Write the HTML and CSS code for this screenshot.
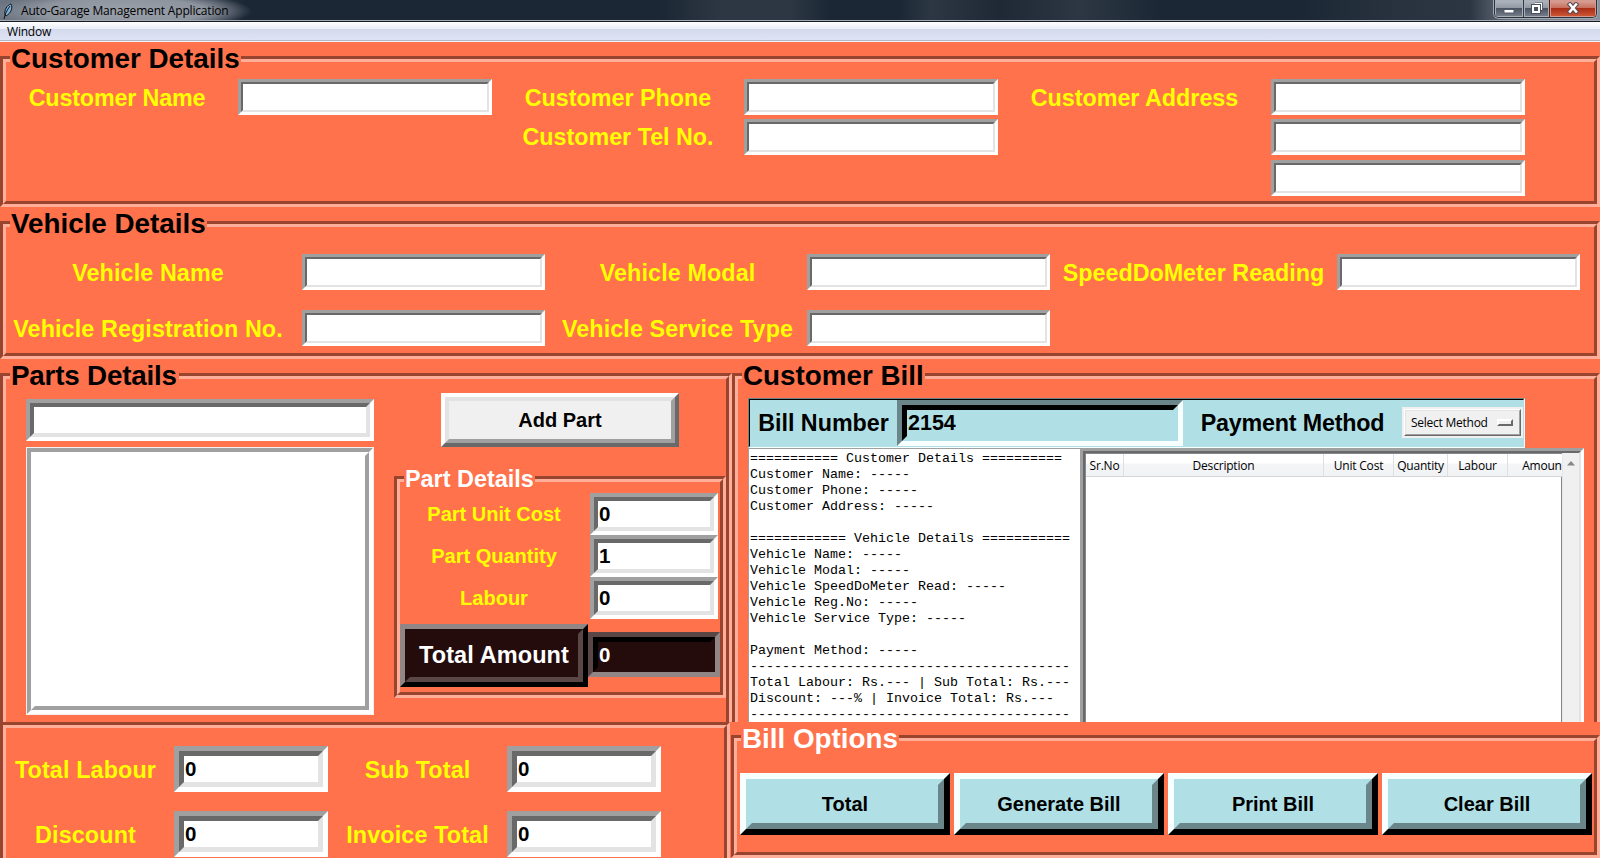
FILE: index.html
```html
<!DOCTYPE html>
<html lang="en">
<head>
	<meta charset="UTF-8">
	<title>Auto-Garage Management Application</title>
	<link rel="stylesheet" href="styles.css">
</head>
<body>
	<div class="app">
		<!-- title bar -->
		<div class="titlebar">
			<svg class="feather" width="12" height="16" viewBox="0 0 12 16">
				<path d="M3 12C2 7 5 2 9 1C11 5 9 10 4 13Z" fill="#7fb2dc" stroke="#10151c" stroke-width="1"/>
				<path d="M2 16C3 11 5 7 8 3" fill="none" stroke="#10151c" stroke-width="1"/>
			</svg>
			<span class="t_text">Auto-Garage Management Application</span>
			<div class="t_btns">
				<span class="t_btn t_min">
					<svg width="12" height="6" viewBox="0 0 12 6"><rect x="1" y="1.5" width="10" height="3.5" fill="#fff" stroke="#535966"/></svg>
				</span>
				<span class="t_btn t_max">
					<svg width="12" height="12" viewBox="0 0 12 12"><path d="M4 2H11V9" fill="none" stroke="#4b515e" stroke-width="3"/><path d="M4 1.5H10.5V8" fill="none" stroke="#fff" stroke-width="1.2"/><rect x="2" y="4" width="6" height="6" fill="#4b515e" stroke="#4b515e" stroke-width="4"/><rect x="2" y="4" width="6" height="6" fill="#4b515e" stroke="#fff" stroke-width="2"/></svg>
				</span>
				<span class="t_btn t_close">
					<svg width="14" height="12" viewBox="0 0 14 12"><path d="M4 2.5L10 9.5M10 2.5L4 9.5" stroke="#5a4a50" stroke-width="4.6" stroke-linecap="square"/><path d="M4 2.5L10 9.5M10 2.5L4 9.5" stroke="#fff" stroke-width="2.6" stroke-linecap="square"/></svg>
				</span>
			</div>
		</div>
		<div class="menubar"><span class="m_text">Window</span></div>

		<!-- customer -->
		<div class="frame customer">
			<div class="frame_in">
				<h2 class="legend">Customer Details</h2>
				<div class="c_grid">
					<label class="c_name">Customer Name</label>
					<div class="entry"><input type="text"></div>
					<label>Customer Phone</label>
					<div class="entry"><input type="text"></div>
					<label>Customer Address</label>
					<div class="entry"><input type="text"></div>
					<label class="c_tel">Customer Tel No.</label>
					<div class="entry"><input type="text"></div>
					<div class="entry c_addr"><input type="text"></div>
					<div class="entry c_addr"><input type="text"></div>
				</div>
			</div>
		</div>

		<!-- vehicle -->
		<div class="frame vehicle">
			<div class="frame_in">
				<h2 class="legend">Vehicle Details</h2>
				<div class="v_grid">
					<label class="v_first">Vehicle Name</label>
					<div class="entry"><input type="text"></div>
					<label class="v_second">Vehicle Modal</label>
					<div class="entry"><input type="text"></div>
					<label>SpeedDoMeter Reading</label>
					<div class="entry"><input type="text"></div>
					<label class="v_first">Vehicle Registration No.</label>
					<div class="entry"><input type="text"></div>
					<label class="v_second">Vehicle Service Type</label>
					<div class="entry"><input type="text"></div>
				</div>
			</div>
		</div>

		<div class="lower">
			<!-- parts -->
			<div class="cell">
				<div class="frame parts">
					<div class="frame_in">
						<h2 class="legend p_legend">Parts Details</h2>
						<div class="p_cols">
							<div class="p_left">
								<div class="entry entry_4"><input type="text"></div>
								<div class="listbox"><div class="l_groove"><div class="l_in"></div></div></div>
							</div>
							<div class="p_right">
								<div class="btn add"><span>Add Part</span></div>
								<div class="frame part">
									<div class="frame_in">
										<h3 class="legend legend_s">Part Details</h3>
										<div class="d_grid">
											<label>Part Unit Cost</label>
											<div class="entry entry_4"><input type="text" value="0"></div>
											<label>Part Quantity</label>
											<div class="entry entry_4"><input type="text" value="1"></div>
											<label>Labour</label>
											<div class="entry entry_4"><input type="text" value="0"></div>
										</div>
										<div class="d_total">
											<div class="btn dark"><span>Total Amount</span></div>
											<div class="entry entry_dark"><input type="text" value="0"></div>
										</div>
									</div>
								</div>
							</div>
						</div>
					</div>
				</div>
			</div>

			<!-- bill -->
			<div class="cell">
				<div class="frame bill">
					<div class="frame_in">
						<h2 class="legend">Customer Bill</h2>
						<div class="b_bar">
							<div class="b_bar_in">
								<label class="b_num">Bill Number</label>
								<div class="entry entry_blue"><input type="text" value="2154"></div>
								<label class="b_pay">Payment Method</label>
								<div class="option"><div class="o_out"><div class="o_in">Select Method<i class="o_mark"></i></div></div></div>
							</div>
						</div>
						<div class="b_body">
<pre class="b_text">=========== Customer Details ==========
Customer Name: -----
Customer Phone: -----
Customer Address: -----

============ Vehicle Details ===========
Vehicle Name: -----
Vehicle Modal: -----
Vehicle SpeedDoMeter Read: -----
Vehicle Reg.No: -----
Vehicle Service Type: -----

Payment Method: -----
----------------------------------------
Total Labour: Rs.--- | Sub Total: Rs.---
Discount: ---% | Invoice Total: Rs.---
----------------------------------------
</pre>
							<div class="tree">
								<div class="tree_in">
									<div class="t_main">
										<div class="t_head">
											<span>Sr.No</span><span>Description</span><span>Unit Cost</span><span>Quantity</span><span>Labour</span><span>Amount</span>
										</div>
										<div class="t_rows"></div>
									</div>
									<div class="t_scroll">
										<svg width="8" height="5" viewBox="0 0 8 5"><path d="M4 0L8 4.5H0Z" fill="#85878c"/></svg>
									</div>
								</div>
							</div>
						</div>
					</div>
				</div>
			</div>

			<!-- totals -->
			<div class="frame totals">
				<div class="frame_in">
					<div class="s_grid">
						<label class="s_first">Total Labour</label>
						<div class="entry entry_5"><input type="text" value="0"></div>
						<label>Sub Total</label>
						<div class="entry entry_5"><input type="text" value="0"></div>
						<label class="s_first">Discount</label>
						<div class="entry entry_5"><input type="text" value="0"></div>
						<label>Invoice Total</label>
						<div class="entry entry_5"><input type="text" value="0"></div>
					</div>
				</div>
			</div>

			<!-- options -->
			<div class="frame options">
				<div class="frame_in">
					<h2 class="legend white">Bill Options</h2>
					<div class="o_grid">
						<div class="btn blue"><span>Total</span></div>
						<div class="btn blue"><span>Generate Bill</span></div>
						<div class="btn blue"><span>Print Bill</span></div>
						<div class="btn blue"><span>Clear Bill</span></div>
					</div>
				</div>
			</div>
		</div>
	</div>
</body>
</html>
```
FILE: styles.css
```css
*{box-sizing:border-box;}
body{margin:0;padding:0;background:#fff;font-family:"Liberation Sans",Arial,sans-serif;}
h2,h3,pre{margin:0;padding:0;}
label{display:block;color:#ff0;font-size:23.3px;font-weight:bold;text-align:center;white-space:nowrap;}

.app{
	width: 1600px;
	height: 858px;
	overflow: hidden;
	background: #ff724c;
}

/* title bar */
.titlebar{
	height: 22px;
	display: flex;
	align-items: flex-start;
	border-bottom: 1px solid #151a24;
	box-shadow: inset 0 -1px #a3a8b3;
	background:
		radial-gradient(ellipse 130px 20px at 122px 11px, #9aa1aa 0, #8d949e 65%, rgba(110,118,130,0) 100%),
		linear-gradient(90deg, #6b7480 0, #4a5562 180px, #1c2735 245px, #1c2735 660px, #2d3744 720px, #2d3744 790px, #1c2735 830px, #1c2735 900px, #2d3744 930px, #1f2936 1000px, #2d3744 1080px, #1c2735 1160px, #1c2735 1300px, #293340 1400px, #2c3642 1470px, #68717d 1510px, #8a929c 1600px);
}

.feather{
	margin: 3px 0 0 2px;
}

.t_text{
	margin-left: 7px;
	font: 12px/22px "Open Sans","Noto Sans",sans-serif;
	letter-spacing: -.18px;
	color: #000;
}

.t_btns{
	display: flex;
	width: 103px;
	height: 18px;
	margin: 0 3px 0 auto;
	border: 1px solid #2c323c;
	border-top: 0;
	border-radius: 0 0 5px 5px;
	overflow: hidden;
	box-shadow: 0 0 0 1px #a2a8b1;
}

.t_btn{
	display: flex;
	align-items: center;
	justify-content: center;
	background: linear-gradient(#b3b8c0 0, #9299a3 45%, #4c5562 50%, #78818c 100%);
	box-shadow: inset 0 0 0 1px #a9afb8;
}

.t_min{
	width: 28px;
	padding-top: 5px;
}

.t_max{
	width: 26px;
	padding-bottom: 2px;
	border-left: 1px solid #333a45;
}

.t_close{
	width: 47px;
	padding-bottom: 2px;
	border-left: 1px solid #5c1c14;
	background: linear-gradient(#d9a79d 0, #c8705f 45%, #ab2d16 50%, #cf5b38 100%);
	box-shadow: inset 0 0 0 1px #d49a90;
}

.menubar{
	height: 20px;
	border-bottom: 1px solid #f3f4f8;
	box-shadow: inset 0 -1px #b4b8c6;
	background: linear-gradient(#fff 0, #e9edf6 7px, #d4daec 7px, #e0e4f5 100%);
}

.m_text{
	display: block;
	margin-left: 7px;
	font: 12px/20px "Open Sans","Noto Sans",sans-serif;
	letter-spacing: -.2px;
}

/* grooved frames */
.frame{
	border: 3px solid;
	border-color: #99442e #ffaf99 #ffaf99 #99442e;
}

.frame_in{
	height: 100%;
	border: 3px solid;
	border-color: #ffaf99 #99442e #99442e #ffaf99;
	display: flow-root;
}

.legend{
	width: fit-content;
	height: 32px;
	margin: -19px 0 0 4px;
	padding: 0 1px;
	font-size: 27.8px;
	line-height: 31px;
	background: #ff724c;
	white-space: nowrap;
}

.p_legend{
	padding-right: 2px;
	letter-spacing: -.2px;
}

.white{
	line-height: 33px;
	color: #fff;
}

/* sunken entries */
.entry{
	height: 36px;
	border: 3px solid;
	border-color: #a0a0a0 #fff #fff #a0a0a0;
}

.entry input{
	display: block;
	width: 100%;
	height: 100%;
	margin: 0;
	padding: 0 1px;
	border: 2px solid;
	border-color: #696969 #e3e3e3 #e3e3e3 #696969;
	border-radius: 0;
	outline: 0;
	background: #fff;
	font: bold 20.5px "Liberation Sans",Arial,sans-serif;
	color: #000;
}

.entry_4{
	height: 42px;
	border-width: 4px;
}

.entry_4 input{
	border-width: 4px;
}

.entry_5{
	height: 46px;
	border-width: 5px;
}

.entry_5 input{
	border-width: 5px;
}

.entry_dark{
	height: 45px;
	margin-top: -2px;
	border-width: 5px;
	border-color: #5b4646 #918585 #918585 #5b4646;
}

.entry_dark input{
	border-width: 5px;
	border-color: #000 #240b0c #240b0c #000;
	background: #240b0c;
	color: #fff;
}

.entry_blue{
	width: 286px;
	height: 46px;
	border-width: 5px;
	border-color: #6a868a #f8ffff #f8ffff #6a868a;
}

.entry_blue input{
	border-width: 5px;
	border-color: #000 #b0e0e6 #b0e0e6 #000;
	background: #b0e0e6;
	font-size: 21.5px;
}

/* raised buttons */
.btn{
	border: 4px solid;
	border-color: #fff #696969 #696969 #fff;
	font-size: 20px;
	font-weight: bold;
}

.btn span{
	display: flex;
	align-items: center;
	justify-content: center;
	height: 100%;
	border: 4px solid;
	border-color: #e3e3e3 #a0a0a0 #a0a0a0 #e3e3e3;
	background: #f0f0f0;
}

.blue{
	height: 62px;
	border-width: 6px;
	border-color: #f8ffff #000 #000 #f8ffff;
}

.blue span{
	border-width: 6px;
	border-color: #b0e0e6 #6a868a #6a868a #b0e0e6;
	background: #b0e0e6;
}

.dark{
	height: 63px;
	border-width: 5px;
	border-color: #918585 #000 #000 #918585;
	font-size: 23.5px;
	letter-spacing: .1px;
	color: #fff;
}

.dark span{
	border-width: 5px;
	border-color: #240b0c #5b4646 #5b4646 #240b0c;
	background: #240b0c;
}

/* customer */
.customer{
	height: 151px;
	margin-top: 14px;
}

.c_grid{
	display: grid;
	grid-template-columns: 232px 254px 252px 254px 273px 254px;
	grid-template-rows: 40px 41px 36px;
	margin-top: 4px;
}

.c_grid label,
.v_grid label{
	line-height: 38px;
}

.c_grid .c_name{
	padding-right: 10px;
	letter-spacing: -.15px;
}

.c_grid .c_tel{
	grid-column: 3;
	line-height: 36px;
}

.c_addr{
	grid-column: 6;
}

/* vehicle */
.vehicle{
	height: 138px;
	margin-top: 14px;
}

.v_grid{
	display: grid;
	grid-template-columns: 296px 243px 262px 243px 287px 243px;
	grid-template-rows: 56px 36px;
	margin-top: 14px;
}

.v_first{
	padding-right: 12px;
	letter-spacing: .12px;
}

.v_second{
	padding-left: 3px;
	letter-spacing: .12px;
}

/* lower part */
.lower{
	display: grid;
	grid-template-columns: 732px 868px;
	grid-template-rows: 363px 142px;
}

.cell{
	padding-top: 14px;
	overflow: hidden;
}

.parts,
.bill{
	height: 400px;
}

.p_cols{
	display: flex;
}

.p_left{
	width: 348px;
	margin: 7px 20px 0 20px;
}

.listbox{
	height: 268px;
	margin-top: 6px;
	border: 1px solid #f0f0f0;
}

.l_groove{
	height: 100%;
	border: 4px solid;
	border-color: #a0a0a0 #fff #fff #a0a0a0;
}

.l_in{
	height: 100%;
	border: 4px solid;
	border-color: #fff #a0a0a0 #a0a0a0 #fff;
	background: #fff;
}

.p_right{
	width: 332px;
	padding-top: 1px;
}

.add{
	width: 238px;
	height: 54px;
	margin-left: 47px;
}

.part{
	height: 222px;
	margin-top: 29px;
}

.legend_s{
	height: 27px;
	margin-top: -17px;
	font-size: 23.4px;
	line-height: 28px;
	color: #fff;
}

.d_grid{
	display: grid;
	grid-template-columns: 190px 128px;
	margin-top: 1px;
}

.d_grid label{
	padding-right: 2px;
	font-size: 20px;
	line-height: 42px;
}

.d_total{
	display: grid;
	grid-template-columns: 188px 132px;
	align-items: center;
	margin-top: 5px;
}

/* customer bill */
.b_bar{
	width: 777px;
	height: 50px;
	margin: 6px 0 0 10px;
	border: 1px solid;
	border-color: #6a868a #f8ffff #f8ffff #6a868a;
}

.b_bar_in{
	display: flex;
	height: 48px;
	border: 1px solid;
	border-color: #000 #b0e0e6 #b0e0e6 #000;
	background: #b0e0e6;
}

.b_bar label{
	color: #000;
	line-height: 46px;
}

.b_num{
	width: 147px;
}

.b_pay{
	width: 219px;
	letter-spacing: -.2px;
}

.option{
	width: 121px;
	height: 31px;
	margin-top: 7px;
	padding: 2px;
	background: #f0f0f0;
}

.o_out{
	height: 27px;
	border: 1px solid;
	border-color: #fff #696969 #696969 #fff;
}

.o_in{
	display: flex;
	align-items: center;
	height: 25px;
	padding-left: 5px;
	border: 1px solid;
	border-color: #e3e3e3 #a0a0a0 #a0a0a0 #e3e3e3;
	font: 12px "Open Sans","Noto Sans",sans-serif;
	letter-spacing: -.25px;
	white-space: nowrap;
}

.o_mark{
	width: 16px;
	height: 7px;
	margin: 0 6px 0 auto;
	border: 2px solid;
	border-color: #fff #696969 #696969 #fff;
	background: #f0f0f0;
}

.b_body{
	display: flex;
	margin-left: 10px;
}

.b_text{
	width: 332px;
	height: 300px;
	padding: 2px 0 0 1px;
	border-top: 1px solid #a0a0a0;
	border-left: 1px solid #a0a0a0;
	background: #fff;
	font: 13.333px/16px "Liberation Mono",monospace;
}

.tree{
	width: 504px;
	height: 300px;
	border: 3px solid;
	border-color: #a0a0a0 #fff #fff #a0a0a0;
}

.tree_in{
	display: flex;
	height: 100%;
	border: 2px solid;
	border-color: #696969 #e3e3e3 #e3e3e3 #696969;
	background: #fff;
}

.t_main{
	width: 477px;
	border: 1px solid #828790;
	border-right: 0;
}

.t_head{
	display: grid;
	grid-template-columns: 38px 200px 70px 54px 60px 73px;
	height: 23px;
	overflow: hidden;
	border-bottom: 1px solid #d5d5d5;
	background: linear-gradient(#fff 0, #fff 9px, #f4f5f7 10px, #f1f2f4 100%);
	font: 12px/23px "Open Sans","Noto Sans",sans-serif;
	letter-spacing: -.2px;
	text-align: center;
	white-space: nowrap;
}

.t_head span{
	border-right: 1px solid #dfe0e2;
}

.t_rows{
	height: 270px;
	border-right: 1px solid #828790;
}

.t_scroll{
	width: 17px;
	padding: 3px 0 0 4px;
	border-left: 1px solid #e7e7e7;
	background: #f0f0f0;
	line-height: 10px;
}

/* totals */
.totals{
	width: 730px;
	height: 142px;
}

.s_grid{
	display: grid;
	grid-template-columns: 168px 154px 179px 154px;
	grid-template-rows: 65px 46px;
	margin-top: 18px;
}

.s_grid label{
	line-height: 48px;
	letter-spacing: .15px;
}

.s_first{
	padding-right: 9px;
}

/* bill options */
.options{
	height: 123px;
	margin: 13px 0 0 -1px;
}

.o_grid{
	display: grid;
	grid-template-columns: repeat(4, 210px);
	gap: 4px;
	margin: 19px 0 0 3px;
}
```
